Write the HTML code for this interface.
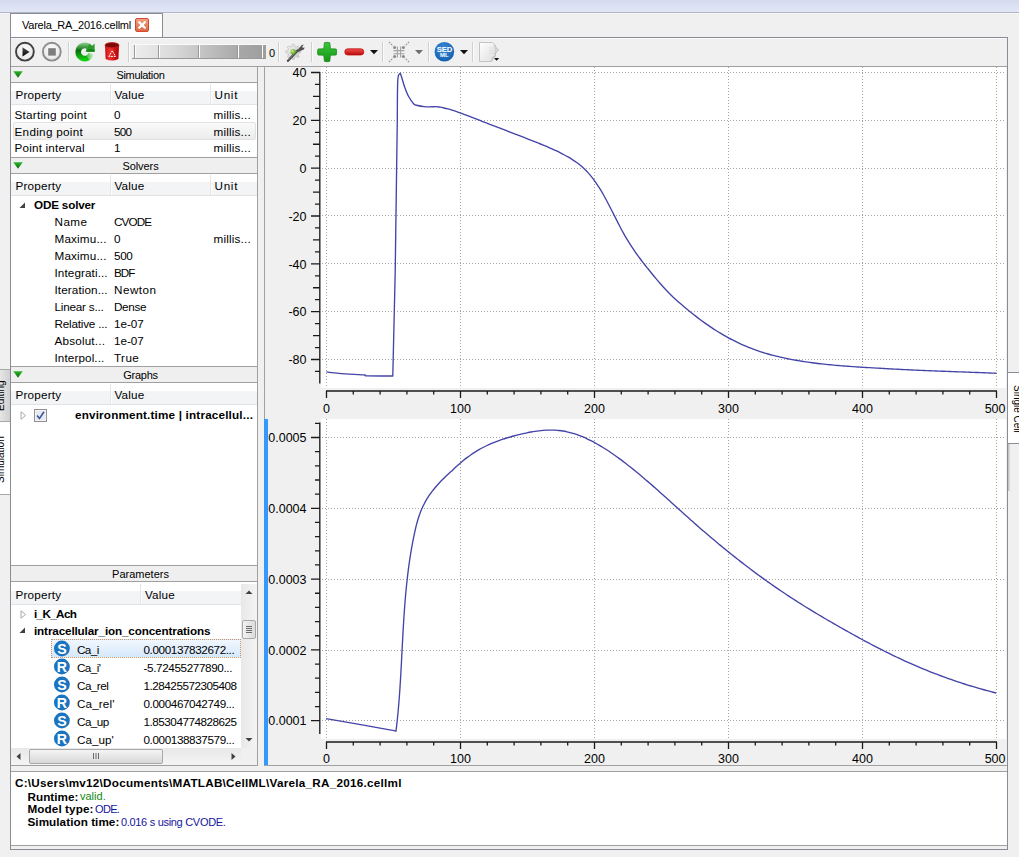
<!DOCTYPE html><html><head><meta charset="utf-8"><style>
html,body{margin:0;padding:0;}
body{width:1019px;height:857px;overflow:hidden;position:relative;background:#f0f0f0;font-family:"Liberation Sans", sans-serif;}
body div{position:absolute;}
svg{position:absolute;overflow:visible;}
</style></head><body>
<div style="left:0px;top:0px;width:1019px;height:12px;background:linear-gradient(#d5dbee,#e1e7f6)"></div>
<div style="left:0px;top:12px;width:1019px;height:1px;background:#b0b6c6"></div>
<div style="left:0px;top:13px;width:1019px;height:1px;background:#f6f6f6"></div>
<div style="left:10px;top:13px;width:153px;height:25px;background:#fff"></div>
<div style="left:10px;top:13px;width:1px;height:24px;background:#898c95"></div>
<div style="left:10px;top:13px;width:153px;height:1px;background:#898c95"></div>
<div style="left:162px;top:13px;width:1px;height:24px;background:#898c95"></div>
<div style="left:22px;top:20.19px;font-size:11px;line-height:11px;font-weight:400;color:#000;letter-spacing:-0.247px;white-space:pre;">Varela_RA_2016.cellml</div>
<div style="left:135px;top:18px;width:14px;height:14px;background:linear-gradient(#efa080,#dc6a45);border:1px solid #d44a30;border-radius:2px;box-sizing:border-box"></div>
<svg style="left:135px;top:18px" width="14" height="14" viewBox="0 0 14 14"><path d="M4.2 4.2L9.8 9.8M9.8 4.2L4.2 9.8" stroke="#fff" stroke-width="2.3" stroke-linecap="round"/></svg>
<div style="left:10px;top:37px;width:998px;height:1px;background:#898c95"></div>
<div style="left:10px;top:37px;width:1px;height:813px;background:#898c95"></div>
<div style="left:1007px;top:37px;width:1px;height:813px;background:#898c95"></div>
<div style="left:10px;top:849px;width:998px;height:1px;background:#898c95"></div>
<div style="left:11px;top:38px;width:996px;height:1px;background:#fafafa"></div>
<div style="left:11px;top:66px;width:996px;height:1px;background:#a0a0a0"></div>
<svg style="left:13px;top:40px" width="24" height="24" viewBox="0 0 24 24"><defs><radialGradient id="gw" cx="50%" cy="40%" r="60%"><stop offset="0" stop-color="#fff"/><stop offset="1" stop-color="#e4e4e4"/></radialGradient>
<linearGradient id="gk" x1="0" y1="0" x2="0" y2="1"><stop offset="0" stop-color="#555"/><stop offset="1" stop-color="#000"/></linearGradient></defs>
<circle cx="11.9" cy="11.7" r="8.9" fill="url(#gw)" stroke="#3f3f3f" stroke-width="1.9"/>
<path d="M9.5 7.2L16.6 11.9L9.5 16.6Z" fill="url(#gk)"/></svg>
<svg style="left:40px;top:40px" width="24" height="24" viewBox="0 0 24 24"><circle cx="11.8" cy="11.7" r="8.9" fill="url(#gw)" stroke="#8d8d8d" stroke-width="1.9"/>
<rect x="8.2" y="8.2" width="7.6" height="7.4" fill="#7d7d7d"/></svg>
<div style="left:68px;top:42px;width:1px;height:20px;background:#cfcfcf"></div>
<div style="left:69px;top:42px;width:1px;height:20px;background:#fbfbfb"></div>
<svg style="left:72px;top:41px" width="24" height="22" viewBox="0 0 24 22"><defs><linearGradient id="gg" x1="0" y1="1.5" x2="0" y2="20.5" gradientUnits="userSpaceOnUse"><stop offset="0" stop-color="#90d490"/><stop offset="0.42" stop-color="#0b6e0b"/><stop offset="1" stop-color="#12e012"/></linearGradient>
<linearGradient id="gt2" x1="14" y1="0" x2="22" y2="0" gradientUnits="userSpaceOnUse"><stop offset="0" stop-color="#1cc01c"/><stop offset="1" stop-color="#1cc01c" stop-opacity="0"/></linearGradient></defs>
<path d="M16.10 16.72A6.6 6.6 0 1 1 16.10 5.28" fill="none" stroke="url(#gg)" stroke-width="5.6"/>
<path d="M19.18 12.71A6.6 6.6 0 0 1 16.10 16.72" fill="none" stroke="url(#gt2)" stroke-width="5.6"/>
<path d="M14.6 7.6L17.4 2.6L20.2 4.8L22.6 2.6L22.6 10.8L13.6 10.8Z" fill="#2a9a2a"/>
<path d="M14.6 10.8L22.6 10.8L22.6 8.5Q18 7.5 15.4 9Z" fill="#128a12"/></svg>
<svg style="left:104px;top:42px" width="16" height="20" viewBox="0 0 16 20"><defs><linearGradient id="gr" x1="0" y1="0" x2="1" y2="0"><stop offset="0" stop-color="#c80e0e"/><stop offset="0.35" stop-color="#f03030"/><stop offset="1" stop-color="#b00000"/></linearGradient></defs>
<path d="M1 3L1.6 17Q8 20 14.4 17L15 3Z" fill="url(#gr)"/>
<ellipse cx="8" cy="3.2" rx="7" ry="2.6" fill="#7a0a0a" stroke="#d02020" stroke-width="0.8"/>
<path d="M8.2 8.8L11.6 14.4H4.8Z" fill="none" stroke="#fff" stroke-width="1" stroke-dasharray="2.2 0.9" stroke-linejoin="round"/></svg>
<div style="left:128px;top:42px;width:1px;height:20px;background:#cfcfcf"></div>
<div style="left:129px;top:42px;width:1px;height:20px;background:#fbfbfb"></div>
<div style="left:132px;top:44px;width:134px;height:1px;background:#fafafa"></div>
<div style="left:132px;top:45px;width:134px;height:13px;background:linear-gradient(90deg,#eeeeee,#dadada 30%,#a8a8a8 80%,#9d9d9d)"></div>
<div style="left:132px;top:58px;width:134px;height:1px;background:#9a9a9a"></div>
<div style="left:134px;top:45px;width:1px;height:13px;background:#9a9a9a"></div>
<div style="left:135px;top:45px;width:1px;height:13px;background:#fdfdfd"></div>
<div style="left:158px;top:45px;width:1px;height:13px;background:#9a9a9a"></div>
<div style="left:159px;top:45px;width:1px;height:13px;background:#fdfdfd"></div>
<div style="left:198px;top:45px;width:1px;height:13px;background:#9a9a9a"></div>
<div style="left:199px;top:45px;width:1px;height:13px;background:#fdfdfd"></div>
<div style="left:237px;top:45px;width:1px;height:13px;background:#9a9a9a"></div>
<div style="left:238px;top:45px;width:1px;height:13px;background:#fdfdfd"></div>
<div style="left:261px;top:45px;width:1px;height:13px;background:#9a9a9a"></div>
<div style="left:262px;top:45px;width:1px;height:13px;background:#fdfdfd"></div>
<div style="left:269px;top:47.69px;font-size:11px;line-height:11px;font-weight:400;color:#000;white-space:pre;">0</div>
<div style="left:278px;top:42px;width:1px;height:20px;background:#cfcfcf"></div>
<div style="left:279px;top:42px;width:1px;height:20px;background:#fbfbfb"></div>
<svg style="left:283px;top:42px" width="22" height="20" viewBox="0 0 22 20"><defs><radialGradient id="gb" cx="35%" cy="35%" r="70%"><stop offset="0" stop-color="#c8f080"/><stop offset="1" stop-color="#4a9a10"/></radialGradient>
<linearGradient id="gy" x1="0" y1="0" x2="1" y2="1"><stop offset="0" stop-color="#f4f4f4"/><stop offset="1" stop-color="#c8c8c8"/></linearGradient></defs>
<path d="M15.77 8.58L17.84 8.81L17.84 10.79L15.77 11.02L15.03 12.80L16.33 14.43L14.93 15.83L13.30 14.53L11.52 15.27L11.29 17.34L9.31 17.34L9.08 15.27L7.30 14.53L5.67 15.83L4.27 14.43L5.57 12.80L4.83 11.02L2.76 10.79L2.76 8.81L4.83 8.58L5.57 6.80L4.27 5.17L5.67 3.77L7.30 5.07L9.08 4.33L9.31 2.26L11.29 2.26L11.52 4.33L13.30 5.07L14.93 3.77L16.33 5.17L15.03 6.80Z" fill="url(#gy)" stroke="#bdbdbd" stroke-width="0.7"/>
<circle cx="10.3" cy="9.8" r="2.2" fill="#f0f0f0"/>
<path d="M5 18.8L14.5 8.6" stroke="#454545" stroke-width="2.3" stroke-linecap="round"/>
<path d="M5.4 18L14 8.8" stroke="#9a9a9a" stroke-width="0.7"/>
<path d="M14.2 8.2L17.6 4.6A2.6 2.6 0 0 1 20.8 2.8L19.2 4.6L20 6L21.4 5.2A2.6 2.6 0 0 1 18.6 8.2L15.4 10Z" fill="#505050"/>
<circle cx="10.2" cy="9.8" r="2.7" fill="url(#gb)"/></svg>
<div style="left:311px;top:42px;width:1px;height:20px;background:#cfcfcf"></div>
<div style="left:312px;top:42px;width:1px;height:20px;background:#fbfbfb"></div>
<svg style="left:317px;top:42px" width="21" height="20" viewBox="0 0 21 20"><defs><linearGradient id="gp" x1="0" y1="0" x2="0" y2="1"><stop offset="0" stop-color="#3cc83c"/><stop offset="1" stop-color="#149414"/></linearGradient></defs>
<path d="M7.4 0.8Q10 -0.2 12.8 0.8L13.4 6.8L19.2 7Q20.2 10 19.2 13L13.4 13.2L12.8 19.2Q10 20.2 7.4 19.2L6.8 13.2L1 13Q0 10 1 7L6.8 6.8Z" fill="url(#gp)" stroke="#1a8a1a" stroke-width="0.8"/></svg>
<svg style="left:344px;top:48px" width="21" height="8" viewBox="0 0 21 8"><defs><linearGradient id="gm" x1="0" y1="0" x2="0" y2="1"><stop offset="0" stop-color="#f05050"/><stop offset="1" stop-color="#b80808"/></linearGradient></defs>
<rect x="0.8" y="0.8" width="19" height="6.2" rx="3" fill="url(#gm)" stroke="#c41010" stroke-width="0.8"/></svg>
<svg style="left:369.5px;top:50px" width="9" height="5" viewBox="0 0 9 5"><path d="M0 0H8L4 4.2Z" fill="#111"/></svg>
<div style="left:382px;top:42px;width:1px;height:20px;background:#cfcfcf"></div>
<div style="left:383px;top:42px;width:1px;height:20px;background:#fbfbfb"></div>
<svg style="left:388px;top:41px" width="22" height="22" viewBox="0 0 22 22"><g stroke="#a4a4a4" stroke-width="1.1" fill="none">
<path d="M5.5 9.6H16.5M5.5 12.7H16.5M9.4 5.5V16.5M12.6 5.5V16.5"/></g>
<g stroke="#9a9a9a" stroke-width="1.3" fill="none"><path d="M1 1L5 5M21 1L17 5M1 21L5 17M21 21L17 17" stroke-dasharray="1.6 1.1"/></g>
<g fill="#8a8a8a"><circle cx="6.6" cy="6.4" r="1.5"/><circle cx="15.4" cy="6.4" r="1.5"/><circle cx="6.6" cy="15.6" r="1.5"/><circle cx="15.4" cy="15.6" r="1.5"/></g></svg>
<svg style="left:414.5px;top:50px" width="9" height="5" viewBox="0 0 9 5"><path d="M0 0H8L4 4.2Z" fill="#6e6e6e"/></svg>
<div style="left:428px;top:42px;width:1px;height:20px;background:#cfcfcf"></div>
<div style="left:429px;top:42px;width:1px;height:20px;background:#fbfbfb"></div>
<svg style="left:434px;top:41px" width="21" height="21" viewBox="0 0 21 21"><defs><radialGradient id="gs" cx="45%" cy="35%" r="65%"><stop offset="0" stop-color="#3a8ad8"/><stop offset="1" stop-color="#1560b0"/></radialGradient></defs>
<circle cx="10.4" cy="10.8" r="9.8" fill="url(#gs)"/>
<text x="10.4" y="11" text-anchor="middle" font-family="Liberation Sans" font-weight="700" font-size="7.8" fill="#fff" letter-spacing="-0.2">SED</text>
<text x="10.4" y="16.4" text-anchor="middle" font-family="Liberation Sans" font-weight="700" font-size="6" fill="#fff">ML</text></svg>
<svg style="left:459.5px;top:50px" width="9" height="5" viewBox="0 0 9 5"><path d="M0 0H8L4 4.2Z" fill="#111"/></svg>
<div style="left:472px;top:42px;width:1px;height:20px;background:#cfcfcf"></div>
<div style="left:473px;top:42px;width:1px;height:20px;background:#fbfbfb"></div>
<svg style="left:479px;top:42px" width="22" height="20" viewBox="0 0 22 20"><defs><linearGradient id="gd" x1="0" y1="0" x2="1" y2="1"><stop offset="0" stop-color="#ffffff"/><stop offset="1" stop-color="#dedede"/></linearGradient></defs>
<path d="M0.5 0.5H13.5L16.5 3.5V14L12.5 19.5H0.5Z" fill="url(#gd)" stroke="#c4c4c4" stroke-width="1"/>
<path d="M12.5 19.5L13.5 15L16.5 14" fill="#d8d8d8" stroke="#bdbdbd" stroke-width="0.8"/>
<path d="M15 3.5L19 8L15 12.5" fill="none" stroke="#c8c8c8" stroke-width="1.6"/>
<path d="M10 6H17M10 8.5H17M10 11H16" stroke="#dadada" stroke-width="0.8"/>
<path d="M15 16H20.2L17.6 18.8Z" fill="#111"/></svg>
<div style="left:11px;top:67px;width:246px;height:698px;background:#fff"></div>
<div style="left:257px;top:67px;width:1px;height:699px;background:#a0a0a0"></div>
<div style="left:11px;top:765px;width:247px;height:1px;background:#a0a0a0"></div>
<div style="left:11px;top:67px;width:246px;height:15px;background:#efefef"></div>
<div style="left:11px;top:66px;width:246px;height:1px;background:#a0a0a0"></div>
<div style="left:11px;top:82px;width:246px;height:1px;background:#a0a0a0"></div>
<svg style="left:13px;top:71px" width="11" height="8" viewBox="0 0 11 8"><defs><linearGradient id="gt" x1="0" y1="0" x2="0" y2="1"><stop offset="0" stop-color="#2cb52c"/><stop offset="1" stop-color="#0a6a0a"/></linearGradient></defs><path d="M0.3 0.3H9.7L5 6.7Z" fill="url(#gt)"/></svg>
<div style="left:-59.5px;width:400px;text-align:center;top:69.99px;font-size:11px;line-height:11px;font-weight:400;color:#000;letter-spacing:-0.329px;white-space:pre;">Simulation</div>
<div style="left:11px;top:83px;width:246px;height:8px;background:#fff"></div>
<div style="left:11px;top:91px;width:246px;height:13px;background:#f3f4f6"></div>
<div style="left:11px;top:104px;width:246px;height:1px;background:#e3e3e3"></div>
<div style="left:110px;top:84px;width:1px;height:20px;background:#e6e6e6"></div>
<div style="left:111px;top:84px;width:1px;height:20px;background:#fdfdfd"></div>
<div style="left:210px;top:84px;width:1px;height:20px;background:#e6e6e6"></div>
<div style="left:211px;top:84px;width:1px;height:20px;background:#fdfdfd"></div>
<div style="left:15.5px;top:88.60px;font-size:11.7px;line-height:11.7px;font-weight:400;color:#000;letter-spacing:0.190px;white-space:pre;">Property</div>
<div style="left:114.5px;top:88.60px;font-size:11.7px;line-height:11.7px;font-weight:400;color:#000;letter-spacing:0.192px;white-space:pre;">Value</div>
<div style="left:214.5px;top:88.60px;font-size:11.7px;line-height:11.7px;font-weight:400;color:#000;letter-spacing:0.701px;white-space:pre;">Unit</div>
<div style="left:13px;top:122px;width:243px;height:18px;background:linear-gradient(#fafafa,#ececec);border:1px solid #e2e2e2;border-radius:2px;box-sizing:border-box"></div>
<div style="left:14.5px;top:108.80px;font-size:11.7px;line-height:11.7px;font-weight:400;color:#000;letter-spacing:0.263px;white-space:pre;">Starting point</div>
<div style="left:114px;top:108.80px;font-size:11.7px;line-height:11.7px;font-weight:400;color:#000;white-space:pre;">0</div>
<div style="left:213.5px;top:108.80px;font-size:11.7px;line-height:11.7px;font-weight:400;color:#000;letter-spacing:0.185px;white-space:pre;">millis...</div>
<div style="left:14.5px;top:125.60px;font-size:11.7px;line-height:11.7px;font-weight:400;color:#000;letter-spacing:0.301px;white-space:pre;">Ending point</div>
<div style="left:114px;top:125.60px;font-size:11.7px;line-height:11.7px;font-weight:400;color:#000;letter-spacing:-0.708px;white-space:pre;">500</div>
<div style="left:213.5px;top:125.60px;font-size:11.7px;line-height:11.7px;font-weight:400;color:#000;letter-spacing:0.185px;white-space:pre;">millis...</div>
<div style="left:14.5px;top:142.40px;font-size:11.7px;line-height:11.7px;font-weight:400;color:#000;letter-spacing:0.194px;white-space:pre;">Point interval</div>
<div style="left:114px;top:142.40px;font-size:11.7px;line-height:11.7px;font-weight:400;color:#000;white-space:pre;">1</div>
<div style="left:213.5px;top:142.40px;font-size:11.7px;line-height:11.7px;font-weight:400;color:#000;letter-spacing:0.185px;white-space:pre;">millis...</div>
<div style="left:11px;top:158px;width:246px;height:15px;background:#efefef"></div>
<div style="left:11px;top:157px;width:246px;height:1px;background:#a0a0a0"></div>
<div style="left:11px;top:173px;width:246px;height:1px;background:#a0a0a0"></div>
<svg style="left:13px;top:162px" width="11" height="8" viewBox="0 0 11 8"><defs><linearGradient id="gt" x1="0" y1="0" x2="0" y2="1"><stop offset="0" stop-color="#2cb52c"/><stop offset="1" stop-color="#0a6a0a"/></linearGradient></defs><path d="M0.3 0.3H9.7L5 6.7Z" fill="url(#gt)"/></svg>
<div style="left:-59.5px;width:400px;text-align:center;top:160.99px;font-size:11px;line-height:11px;font-weight:400;color:#000;letter-spacing:-0.081px;white-space:pre;">Solvers</div>
<div style="left:11px;top:174px;width:246px;height:8px;background:#fff"></div>
<div style="left:11px;top:182px;width:246px;height:13px;background:#f3f4f6"></div>
<div style="left:11px;top:195px;width:246px;height:1px;background:#e3e3e3"></div>
<div style="left:110px;top:175px;width:1px;height:20px;background:#e6e6e6"></div>
<div style="left:111px;top:175px;width:1px;height:20px;background:#fdfdfd"></div>
<div style="left:210px;top:175px;width:1px;height:20px;background:#e6e6e6"></div>
<div style="left:211px;top:175px;width:1px;height:20px;background:#fdfdfd"></div>
<div style="left:15.5px;top:179.60px;font-size:11.7px;line-height:11.7px;font-weight:400;color:#000;letter-spacing:0.190px;white-space:pre;">Property</div>
<div style="left:114.5px;top:179.60px;font-size:11.7px;line-height:11.7px;font-weight:400;color:#000;letter-spacing:0.192px;white-space:pre;">Value</div>
<div style="left:214.5px;top:179.60px;font-size:11.7px;line-height:11.7px;font-weight:400;color:#000;letter-spacing:0.701px;white-space:pre;">Unit</div>
<svg style="left:18.5px;top:201.5px" width="7" height="7" viewBox="0 0 7 7"><path d="M6 0.5V6H0.5Z" fill="#404040"/></svg>
<div style="left:34px;top:199.40px;font-size:11.7px;line-height:11.7px;font-weight:700;color:#000;letter-spacing:-0.180px;white-space:pre;">ODE solver</div>
<div style="left:54.5px;top:216.40px;font-size:11.7px;line-height:11.7px;font-weight:400;color:#000;letter-spacing:0.438px;white-space:pre;">Name</div>
<div style="left:114px;top:216.40px;font-size:11.7px;line-height:11.7px;font-weight:400;color:#000;letter-spacing:-0.895px;white-space:pre;">CVODE</div>
<div style="left:54.5px;top:233.32px;font-size:11.7px;line-height:11.7px;font-weight:400;color:#000;letter-spacing:0.168px;white-space:pre;">Maximu...</div>
<div style="left:114px;top:233.32px;font-size:11.7px;line-height:11.7px;font-weight:400;color:#000;white-space:pre;">0</div>
<div style="left:213.5px;top:233.32px;font-size:11.7px;line-height:11.7px;font-weight:400;color:#000;letter-spacing:0.185px;white-space:pre;">millis...</div>
<div style="left:54.5px;top:250.24px;font-size:11.7px;line-height:11.7px;font-weight:400;color:#000;letter-spacing:0.168px;white-space:pre;">Maximu...</div>
<div style="left:114px;top:250.24px;font-size:11.7px;line-height:11.7px;font-weight:400;color:#000;letter-spacing:-0.358px;white-space:pre;">500</div>
<div style="left:54.5px;top:267.16px;font-size:11.7px;line-height:11.7px;font-weight:400;color:#000;letter-spacing:0.101px;white-space:pre;">Integrati...</div>
<div style="left:114px;top:267.16px;font-size:11.7px;line-height:11.7px;font-weight:400;color:#000;letter-spacing:-0.938px;white-space:pre;">BDF</div>
<div style="left:54.5px;top:284.08px;font-size:11.7px;line-height:11.7px;font-weight:400;color:#000;letter-spacing:0.101px;white-space:pre;">Iteration...</div>
<div style="left:114px;top:284.08px;font-size:11.7px;line-height:11.7px;font-weight:400;color:#000;letter-spacing:0.492px;white-space:pre;">Newton</div>
<div style="left:54.5px;top:301.00px;font-size:11.7px;line-height:11.7px;font-weight:400;color:#000;letter-spacing:-0.203px;white-space:pre;">Linear s...</div>
<div style="left:114px;top:301.00px;font-size:11.7px;line-height:11.7px;font-weight:400;color:#000;letter-spacing:-0.324px;white-space:pre;">Dense</div>
<div style="left:54.5px;top:317.92px;font-size:11.7px;line-height:11.7px;font-weight:400;color:#000;letter-spacing:-0.193px;white-space:pre;">Relative ...</div>
<div style="left:114px;top:317.92px;font-size:11.7px;line-height:11.7px;font-weight:400;color:#000;letter-spacing:-0.027px;white-space:pre;">1e-07</div>
<div style="left:54.5px;top:334.84px;font-size:11.7px;line-height:11.7px;font-weight:400;color:#000;letter-spacing:0.185px;white-space:pre;">Absolut...</div>
<div style="left:114px;top:334.84px;font-size:11.7px;line-height:11.7px;font-weight:400;color:#000;letter-spacing:-0.027px;white-space:pre;">1e-07</div>
<div style="left:54.5px;top:351.76px;font-size:11.7px;line-height:11.7px;font-weight:400;color:#000;letter-spacing:0.107px;white-space:pre;">Interpol...</div>
<div style="left:114px;top:351.76px;font-size:11.7px;line-height:11.7px;font-weight:400;color:#000;letter-spacing:0.397px;white-space:pre;">True</div>
<div style="left:11px;top:367px;width:246px;height:15px;background:#efefef"></div>
<div style="left:11px;top:366px;width:246px;height:1px;background:#a0a0a0"></div>
<div style="left:11px;top:382px;width:246px;height:1px;background:#a0a0a0"></div>
<svg style="left:13px;top:371px" width="11" height="8" viewBox="0 0 11 8"><defs><linearGradient id="gt" x1="0" y1="0" x2="0" y2="1"><stop offset="0" stop-color="#2cb52c"/><stop offset="1" stop-color="#0a6a0a"/></linearGradient></defs><path d="M0.3 0.3H9.7L5 6.7Z" fill="url(#gt)"/></svg>
<div style="left:-59.5px;width:400px;text-align:center;top:369.99px;font-size:11px;line-height:11px;font-weight:400;color:#000;letter-spacing:-0.236px;white-space:pre;">Graphs</div>
<div style="left:11px;top:383px;width:246px;height:8px;background:#fff"></div>
<div style="left:11px;top:391px;width:246px;height:13px;background:#f3f4f6"></div>
<div style="left:11px;top:404px;width:246px;height:1px;background:#e3e3e3"></div>
<div style="left:110px;top:384px;width:1px;height:20px;background:#e6e6e6"></div>
<div style="left:111px;top:384px;width:1px;height:20px;background:#fdfdfd"></div>
<div style="left:15.5px;top:388.60px;font-size:11.7px;line-height:11.7px;font-weight:400;color:#000;letter-spacing:0.190px;white-space:pre;">Property</div>
<div style="left:114.5px;top:388.60px;font-size:11.7px;line-height:11.7px;font-weight:400;color:#000;letter-spacing:0.192px;white-space:pre;">Value</div>
<svg style="left:19.5px;top:410.5px" width="7" height="9" viewBox="0 0 7 9"><path d="M1 0.8L5.6 4.5L1 8.2Z" fill="#fff" stroke="#a8a8a8" stroke-width="1"/></svg>
<svg style="left:34px;top:409px" width="13" height="13" viewBox="0 0 13 13"><rect x="0.5" y="0.5" width="12" height="12" fill="#f4f4f4" stroke="#8f8f8f"/><rect x="2" y="2" width="9" height="9" fill="#e6eaf0"/><path d="M3 6.5L5.5 9.5L10 2.8" fill="none" stroke="#3b55a0" stroke-width="1.6"/></svg>
<div style="left:75px;top:409.40px;font-size:11.7px;line-height:11.7px;font-weight:700;color:#000;letter-spacing:0.180px;white-space:pre;">environment.time | intracellul...</div>
<div style="left:11px;top:566px;width:246px;height:15px;background:#efefef"></div>
<div style="left:11px;top:565px;width:246px;height:1px;background:#a0a0a0"></div>
<div style="left:11px;top:581px;width:246px;height:1px;background:#a0a0a0"></div>
<div style="left:-59.5px;width:400px;text-align:center;top:568.99px;font-size:11px;line-height:11px;font-weight:400;color:#000;letter-spacing:0.005px;white-space:pre;">Parameters</div>
<div style="left:11px;top:583px;width:246px;height:8px;background:#fff"></div>
<div style="left:11px;top:591px;width:246px;height:13px;background:#f3f4f6"></div>
<div style="left:11px;top:604px;width:246px;height:1px;background:#e3e3e3"></div>
<div style="left:140px;top:584px;width:1px;height:20px;background:#e6e6e6"></div>
<div style="left:141px;top:584px;width:1px;height:20px;background:#fdfdfd"></div>
<div style="left:15.5px;top:588.60px;font-size:11.7px;line-height:11.7px;font-weight:400;color:#000;letter-spacing:0.190px;white-space:pre;">Property</div>
<div style="left:145px;top:588.60px;font-size:11.7px;line-height:11.7px;font-weight:400;color:#000;letter-spacing:0.192px;white-space:pre;">Value</div>
<svg style="left:19.5px;top:609.5px" width="7" height="9" viewBox="0 0 7 9"><path d="M1 0.8L5.6 4.5L1 8.2Z" fill="#fff" stroke="#a8a8a8" stroke-width="1"/></svg>
<div style="left:34px;top:608.40px;font-size:11.7px;line-height:11.7px;font-weight:700;color:#000;letter-spacing:-0.647px;white-space:pre;">i_K_Ach</div>
<svg style="left:18.5px;top:627px" width="7" height="7" viewBox="0 0 7 7"><path d="M6 0.5V6H0.5Z" fill="#404040"/></svg>
<div style="left:34px;top:625.20px;font-size:11.7px;line-height:11.7px;font-weight:700;color:#000;letter-spacing:-0.134px;white-space:pre;">intracellular_ion_concentrations</div>
<div style="left:51px;top:639px;width:190px;height:19px;background:linear-gradient(#f1f7fe,#d6e8fb);border:1px dotted #c8946a;box-sizing:border-box"></div>
<svg style="left:53px;top:640px" width="18" height="17" viewBox="0 0 18 17"><circle cx="8.9" cy="8.50" r="7.9" fill="#1a74c0"/><text x="8.9" y="13.70" text-anchor="middle" font-family="Liberation Sans" font-weight="700" font-size="14.2" fill="#fff">S</text></svg>
<div style="left:77px;top:643.50px;font-size:11.7px;line-height:11.7px;font-weight:400;color:#000;letter-spacing:-0.582px;white-space:pre;">Ca_i</div>
<div style="left:143.5px;top:643.50px;font-size:11.7px;line-height:11.7px;font-weight:400;color:#000;letter-spacing:-0.394px;white-space:pre;">0.000137832672...</div>
<svg style="left:53px;top:658px" width="18" height="17" viewBox="0 0 18 17"><circle cx="8.9" cy="8.50" r="7.9" fill="#1a74c0"/><text x="8.9" y="13.70" text-anchor="middle" font-family="Liberation Sans" font-weight="700" font-size="14.2" fill="#fff">R</text></svg>
<div style="left:77px;top:661.50px;font-size:11.7px;line-height:11.7px;font-weight:400;color:#000;letter-spacing:-0.570px;white-space:pre;">Ca_i'</div>
<div style="left:143.5px;top:661.50px;font-size:11.7px;line-height:11.7px;font-weight:400;color:#000;letter-spacing:-0.374px;white-space:pre;">-5.72455277890...</div>
<svg style="left:53px;top:676px" width="18" height="17" viewBox="0 0 18 17"><circle cx="8.9" cy="8.50" r="7.9" fill="#1a74c0"/><text x="8.9" y="13.70" text-anchor="middle" font-family="Liberation Sans" font-weight="700" font-size="14.2" fill="#fff">S</text></svg>
<div style="left:77px;top:679.50px;font-size:11.7px;line-height:11.7px;font-weight:400;color:#000;letter-spacing:-0.528px;white-space:pre;">Ca_rel</div>
<div style="left:143.5px;top:679.50px;font-size:11.7px;line-height:11.7px;font-weight:400;color:#000;letter-spacing:-0.477px;white-space:pre;">1.28425572305408</div>
<svg style="left:53px;top:694px" width="18" height="17" viewBox="0 0 18 17"><circle cx="8.9" cy="8.50" r="7.9" fill="#1a74c0"/><text x="8.9" y="13.70" text-anchor="middle" font-family="Liberation Sans" font-weight="700" font-size="14.2" fill="#fff">R</text></svg>
<div style="left:77px;top:697.50px;font-size:11.7px;line-height:11.7px;font-weight:400;color:#000;letter-spacing:0.121px;white-space:pre;">Ca_rel'</div>
<div style="left:143.5px;top:697.50px;font-size:11.7px;line-height:11.7px;font-weight:400;color:#000;letter-spacing:-0.394px;white-space:pre;">0.000467042749...</div>
<svg style="left:53px;top:712px" width="18" height="17" viewBox="0 0 18 17"><circle cx="8.9" cy="8.50" r="7.9" fill="#1a74c0"/><text x="8.9" y="13.70" text-anchor="middle" font-family="Liberation Sans" font-weight="700" font-size="14.2" fill="#fff">S</text></svg>
<div style="left:77px;top:715.50px;font-size:11.7px;line-height:11.7px;font-weight:400;color:#000;letter-spacing:-0.563px;white-space:pre;">Ca_up</div>
<div style="left:143.5px;top:715.50px;font-size:11.7px;line-height:11.7px;font-weight:400;color:#000;letter-spacing:-0.477px;white-space:pre;">1.85304774828625</div>
<svg style="left:53px;top:730px" width="18" height="17" viewBox="0 0 18 17"><circle cx="8.9" cy="8.50" r="7.9" fill="#1a74c0"/><text x="8.9" y="13.70" text-anchor="middle" font-family="Liberation Sans" font-weight="700" font-size="14.2" fill="#fff">R</text></svg>
<div style="left:77px;top:733.50px;font-size:11.7px;line-height:11.7px;font-weight:400;color:#000;letter-spacing:0.026px;white-space:pre;">Ca_up'</div>
<div style="left:143.5px;top:733.50px;font-size:11.7px;line-height:11.7px;font-weight:400;color:#000;letter-spacing:-0.394px;white-space:pre;">0.000138837579...</div>
<div style="left:241px;top:584px;width:16px;height:164px;background:linear-gradient(90deg,#e8e8e8,#f4f4f4)"></div>
<svg style="left:241px;top:588px" width="16" height="8" viewBox="0 0 16 8"><path d="M4.5 6H11.5L8 2.5Z" fill="#404040"/></svg>
<svg style="left:241px;top:736px" width="16" height="8" viewBox="0 0 16 8"><path d="M4.5 2H11.5L8 5.5Z" fill="#404040"/></svg>
<div style="left:242px;top:620px;width:14px;height:19px;background:linear-gradient(90deg,#f2f2f2,#dcdcdc);border:1px solid #a8a8a8;border-radius:2px;box-sizing:border-box"></div>
<svg style="left:242px;top:620px" width="14" height="19" viewBox="0 0 14 19"><path d="M4 6.5H10M4 8.5H10M4 10.5H10M4 12.5H10" stroke="#6a6a6a" stroke-width="1"/></svg>
<div style="left:11px;top:748px;width:230px;height:17px;background:linear-gradient(#e8e8e8,#f4f4f4)"></div>
<div style="left:241px;top:748px;width:16px;height:17px;background:#f0f0f0"></div>
<svg style="left:11px;top:748px" width="16" height="17" viewBox="0 0 16 17"><path d="M9.5 5V12L5.5 8.5Z" fill="#404040"/></svg>
<svg style="left:225px;top:748px" width="16" height="17" viewBox="0 0 16 17"><path d="M6.5 5V12L10.5 8.5Z" fill="#404040"/></svg>
<div style="left:29px;top:749px;width:134px;height:15px;background:linear-gradient(#f4f4f4,#d8d8d8);border:1px solid #a8a8a8;border-radius:2px;box-sizing:border-box"></div>
<svg style="left:29px;top:749px" width="134" height="15" viewBox="0 0 134 15"><path d="M64.5 4V10M67 4V10M69.5 4V10" stroke="#6a6a6a" stroke-width="1"/></svg>
<div style="left:258px;top:67px;width:6px;height:699px;background:#f0f0f0"></div>
<div style="left:264px;top:67px;width:743px;height:699px;background:#f0f0f0"></div>
<div style="left:264px;top:67px;width:1px;height:352px;background:#a0a0a0"></div>
<div style="left:264px;top:419px;width:4px;height:347px;background:#3399ff"></div>
<div style="left:264px;top:765px;width:743px;height:1px;background:#a0a0a0"></div>
<div style="left:321px;top:67px;width:685px;height:321px;background:#fff"></div>
<div style="left:321px;top:419px;width:685px;height:320px;background:#fff"></div>
<svg style="left:0px;top:0px" width="1019" height="857" viewBox="0 0 1019 857"><path d="M322 72.5H1006 M322 120.5H1006 M322 168.5H1006 M322 215.5H1006 M322 263.5H1006 M322 311.5H1006 M322 359.5H1006 M326.5 67V388 M460.5 67V388 M594.5 67V388 M728.5 67V388 M862.5 67V388 M996.5 67V388" stroke="#a4a4a4" stroke-width="1" stroke-dasharray="1 2" fill="none" shape-rendering="crispEdges"/><path d="M326.4 371.9C327.78 372.07 331.52 372.57 334.7 372.9C337.88 373.23 340.58 373.58 345.5 373.9C350.42 374.22 360.6 374.48 364.2 374.8C367.8 375.12 362.33 375.6 367.1 375.8C371.87 376 388.52 375.97 392.8 376C393.2 358.67 394.8 289.33 395.2 272C395.55 246.67 396.95 145.33 397.3 120C397.38 113.33 397.3 87.8 397.8 80C398.3 72.2 399.88 74.33 400.3 73.2C400.62 74.17 401.5 76.78 402.2 79C402.9 81.22 403.45 83.62 404.5 86.5C405.55 89.38 406.95 93.4 408.5 96.3C410.05 99.2 412.27 102.37 413.8 103.9C415.33 105.43 416 105.05 417.7 105.5C419.4 105.95 421.95 106.37 424 106.6C426.05 106.83 428 106.89 430 106.9C432 106.91 434.33 106.6 436 106.65C437.67 106.7 438.67 106.98 440 107.2C441.33 107.42 442.67 107.69 444 107.98C445.33 108.27 446.67 108.61 448 108.97C449.33 109.32 450.67 109.71 452 110.12C453.33 110.53 454.67 110.97 456 111.42C457.33 111.87 458.67 112.34 460 112.82C461.33 113.31 462.67 113.81 464 114.31C465.33 114.81 466.67 115.33 468 115.84C469.33 116.36 470.67 116.88 472 117.39C473.33 117.91 474.67 118.42 476 118.94C477.33 119.45 478.67 119.97 480 120.48C481.33 121 482.67 121.51 484 122.03C485.33 122.54 486.67 123.05 488 123.57C489.33 124.08 490.67 124.59 492 125.11C493.33 125.62 494.67 126.13 496 126.65C497.33 127.16 498.67 127.67 500 128.19C501.33 128.7 502.67 129.21 504 129.73C505.33 130.24 506.67 130.75 508 131.27C509.33 131.78 510.67 132.3 512 132.81C513.33 133.33 514.67 133.84 516 134.36C517.33 134.87 518.67 135.39 520 135.9C521.33 136.42 522.67 136.94 524 137.46C525.33 137.97 526.67 138.49 528 139.01C529.33 139.53 530.67 140.05 532 140.57C533.33 141.1 534.67 141.62 536 142.15C537.33 142.68 538.67 143.21 540 143.75C541.33 144.3 542.67 144.84 544 145.4C545.33 145.96 546.67 146.52 548 147.1C549.33 147.68 550.67 148.27 552 148.88C553.33 149.48 554.67 150.1 556 150.73C557.33 151.37 558.67 152.02 560 152.69C561.33 153.36 562.67 154.04 564 154.75C565.33 155.46 566.67 156.18 568 156.94C569.33 157.7 570.67 158.47 572 159.31C573.33 160.14 574.67 161 576 161.95C577.33 162.89 578.67 163.88 580 164.97C581.33 166.06 582.67 167.22 584 168.49C585.33 169.76 586.67 171.13 588 172.61C589.33 174.09 590.67 175.67 592 177.37C593.33 179.07 594.67 180.88 596 182.81C597.33 184.73 598.67 186.77 600 188.93C601.33 191.09 602.67 193.38 604 195.76C605.33 198.14 606.67 200.66 608 203.2C609.33 205.74 610.67 208.38 612 211C613.33 213.62 614.67 216.3 616 218.91C617.33 221.53 618.67 224.16 620 226.69C621.33 229.22 622.67 231.72 624 234.09C625.33 236.46 626.67 238.73 628 240.91C629.33 243.1 630.67 245.18 632 247.2C633.33 249.22 634.67 251.15 636 253.03C637.33 254.92 638.67 256.73 640 258.51C641.33 260.3 642.67 262.02 644 263.74C645.33 265.45 646.67 267.12 648 268.79C649.33 270.46 650.67 272.11 652 273.74C653.33 275.38 654.67 277 656 278.58C657.33 280.17 658.67 281.73 660 283.26C661.33 284.79 662.67 286.29 664 287.75C665.33 289.21 666.67 290.64 668 292.01C669.33 293.39 670.67 294.72 672 296.01C673.33 297.31 674.67 298.55 676 299.77C677.33 300.99 678.67 302.18 680 303.34C681.33 304.5 682.67 305.64 684 306.76C685.33 307.88 686.67 308.98 688 310.06C689.33 311.15 690.67 312.22 692 313.28C693.33 314.34 694.67 315.38 696 316.4C697.33 317.43 698.67 318.44 700 319.43C701.33 320.42 702.67 321.39 704 322.35C705.33 323.31 706.67 324.24 708 325.16C709.33 326.08 710.67 326.99 712 327.87C713.33 328.75 714.67 329.61 716 330.46C717.33 331.3 718.67 332.13 720 332.94C721.33 333.74 722.67 334.53 724 335.3C725.33 336.07 726.67 336.82 728 337.55C729.33 338.28 730.67 339 732 339.69C733.33 340.38 734.67 341.06 736 341.71C737.33 342.37 738.67 343.01 740 343.63C741.33 344.25 742.67 344.85 744 345.43C745.33 346.01 746.67 346.57 748 347.12C749.33 347.66 750.67 348.19 752 348.7C753.33 349.21 754.67 349.7 756 350.17C757.33 350.64 758.67 351.1 760 351.53C761.33 351.97 762.67 352.39 764 352.8C765.33 353.21 766.67 353.6 768 353.98C769.33 354.36 770.67 354.72 772 355.07C773.33 355.42 774.67 355.76 776 356.09C777.33 356.42 778.67 356.73 780 357.04C781.33 357.34 782.67 357.64 784 357.93C785.33 358.21 786.67 358.49 788 358.76C789.33 359.03 790.67 359.29 792 359.54C793.33 359.79 794.67 360.03 796 360.26C797.33 360.5 798.67 360.72 800 360.94C801.33 361.16 802.67 361.37 804 361.58C805.33 361.78 806.67 361.98 808 362.17C809.33 362.36 810.67 362.54 812 362.72C813.33 362.89 814.67 363.06 816 363.23C817.33 363.39 818.67 363.55 820 363.71C821.33 363.86 822.67 364.01 824 364.15C825.33 364.29 826.67 364.43 828 364.57C829.33 364.7 830.67 364.83 832 364.95C833.33 365.08 834.67 365.2 836 365.31C837.33 365.43 838.67 365.54 840 365.65C841.33 365.76 842.67 365.87 844 365.97C845.33 366.07 846.67 366.17 848 366.27C849.33 366.37 850.67 366.46 852 366.55C853.33 366.65 854.67 366.74 856 366.83C857.33 366.91 858.67 367 860 367.09C861.33 367.17 862.67 367.25 864 367.34C865.33 367.42 866.67 367.5 868 367.58C869.33 367.66 870.67 367.74 872 367.82C873.33 367.9 874.67 367.98 876 368.06C877.33 368.14 878.67 368.22 880 368.29C881.33 368.37 882.67 368.44 884 368.52C885.33 368.59 886.67 368.67 888 368.74C889.33 368.81 890.67 368.89 892 368.96C893.33 369.03 894.67 369.1 896 369.17C897.33 369.24 898.67 369.31 900 369.38C901.33 369.45 902.67 369.51 904 369.58C905.33 369.65 906.67 369.71 908 369.78C909.33 369.84 910.67 369.9 912 369.97C913.33 370.03 914.67 370.09 916 370.15C917.33 370.21 918.67 370.27 920 370.33C921.33 370.39 922.67 370.45 924 370.5C925.33 370.56 926.67 370.62 928 370.67C929.33 370.73 930.67 370.78 932 370.83C933.33 370.89 934.67 370.94 936 370.99C937.33 371.04 938.67 371.09 940 371.14C941.33 371.19 942.67 371.24 944 371.29C945.33 371.34 946.67 371.39 948 371.44C949.33 371.49 950.67 371.54 952 371.58C953.33 371.63 954.67 371.68 956 371.73C957.33 371.78 958.67 371.82 960 371.87C961.33 371.92 962.67 371.97 964 372.02C965.33 372.06 966.67 372.11 968 372.16C969.33 372.21 970.67 372.26 972 372.31C973.33 372.36 974.67 372.41 976 372.46C977.33 372.51 978.67 372.56 980 372.61C981.33 372.66 982.67 372.71 984 372.76C985.33 372.81 986.67 372.87 988 372.92C989.33 372.97 990.58 373.02 992 373.08C993.42 373.14 995.75 373.24 996.5 373.28" stroke="#4444a8" stroke-width="1.35" fill="none" stroke-linejoin="round"/><path d="M319.8 72V383.4 M311 72.5H320 M311 120.334H320 M311 168.168H320 M311 216.002H320 M311 263.836H320 M311 311.67H320 M311 359.504H320 M313 96.417H320 M313 144.251H320 M313 192.085H320 M313 239.919H320 M313 287.75300000000004H320 M313 335.587H320 M315 84.4585H320 M315 108.3755H320 M315 132.29250000000002H320 M315 156.2095H320 M315 180.12650000000002H320 M315 204.0435H320 M315 227.96050000000002H320 M315 251.8775H320 M315 275.7945H320 M315 299.7115H320 M315 323.62850000000003H320 M315 347.5455H320 M315 371.46250000000003H320 M326 391H997 M326.5 391V398 M353.3 391V394.5 M380.1 391V394.5 M406.9 391V394.5 M433.7 391V394.5 M460.5 391V398 M487.3 391V394.5 M514.1 391V394.5 M540.9 391V394.5 M567.7 391V394.5 M594.5 391V398 M621.3 391V394.5 M648.1 391V394.5 M674.9 391V394.5 M701.7 391V394.5 M728.5 391V398 M755.3 391V394.5 M782.1 391V394.5 M808.9 391V394.5 M835.7 391V394.5 M862.5 391V398 M889.3 391V394.5 M916.1 391V394.5 M942.9 391V394.5 M969.7 391V394.5 M996.5 391V398" stroke="#1a1a1a" stroke-width="1.3" fill="none"/></svg>
<div style="right:712.5px;top:67.22px;font-size:12.5px;line-height:12.5px;font-weight:400;color:#000;white-space:pre;">40</div>
<div style="right:712.5px;top:115.05px;font-size:12.5px;line-height:12.5px;font-weight:400;color:#000;white-space:pre;">20</div>
<div style="right:712.5px;top:162.89px;font-size:12.5px;line-height:12.5px;font-weight:400;color:#000;white-space:pre;">0</div>
<div style="right:712.5px;top:210.72px;font-size:12.5px;line-height:12.5px;font-weight:400;color:#000;white-space:pre;">-20</div>
<div style="right:712.5px;top:258.55px;font-size:12.5px;line-height:12.5px;font-weight:400;color:#000;white-space:pre;">-40</div>
<div style="right:712.5px;top:306.39px;font-size:12.5px;line-height:12.5px;font-weight:400;color:#000;white-space:pre;">-60</div>
<div style="right:712.5px;top:354.22px;font-size:12.5px;line-height:12.5px;font-weight:400;color:#000;white-space:pre;">-80</div>
<div style="left:126.5px;width:400px;text-align:center;top:402.62px;font-size:12.5px;line-height:12.5px;font-weight:400;color:#000;white-space:pre;">0</div>
<div style="left:260.5px;width:400px;text-align:center;top:402.62px;font-size:12.5px;line-height:12.5px;font-weight:400;color:#000;white-space:pre;">100</div>
<div style="left:394.5px;width:400px;text-align:center;top:402.62px;font-size:12.5px;line-height:12.5px;font-weight:400;color:#000;white-space:pre;">200</div>
<div style="left:528.5px;width:400px;text-align:center;top:402.62px;font-size:12.5px;line-height:12.5px;font-weight:400;color:#000;white-space:pre;">300</div>
<div style="left:662.5px;width:400px;text-align:center;top:402.62px;font-size:12.5px;line-height:12.5px;font-weight:400;color:#000;white-space:pre;">400</div>
<div style="right:13.5px;top:402.62px;font-size:12.5px;line-height:12.5px;font-weight:400;color:#000;white-space:pre;">500</div>
<svg style="left:0px;top:0px" width="1019" height="857" viewBox="0 0 1019 857"><path d="M322 437.5H1006 M322 508.5H1006 M322 579.5H1006 M322 650.5H1006 M322 720.5H1006 M326.5 419V739 M460.5 419V739 M594.5 419V739 M728.5 419V739 M862.5 419V739 M996.5 419V739" stroke="#a4a4a4" stroke-width="1" stroke-dasharray="1 2" fill="none" shape-rendering="crispEdges"/><path d="M326.1 718.6C337.63 720.63 383.77 728.77 395.3 730.8C395.42 730.87 395.88 731.13 395.99 731.2C396.05 730.7 396.24 729.2 396.36 728.2C396.48 727.2 396.59 726.2 396.7 725.2C396.82 724.2 396.93 723.2 397.04 722.2C397.15 721.2 397.25 720.2 397.35 719.2C397.46 718.2 397.56 717.2 397.66 716.2C397.76 715.2 397.85 714.2 397.95 713.2C398.04 712.2 398.14 711.2 398.23 710.2C398.32 709.2 398.41 708.2 398.49 707.2C398.58 706.2 398.66 705.2 398.75 704.2C398.83 703.2 398.91 702.2 398.99 701.2C399.07 700.2 399.15 699.2 399.22 698.2C399.3 697.2 399.37 696.2 399.45 695.2C399.52 694.2 399.59 693.2 399.66 692.2C399.73 691.2 399.8 690.2 399.87 689.2C399.93 688.2 400 687.2 400.06 686.2C400.13 685.2 400.19 684.2 400.26 683.2C400.32 682.2 400.38 681.2 400.44 680.2C400.5 679.2 400.56 678.2 400.62 677.2C400.68 676.2 400.74 675.2 400.79 674.2C400.85 673.2 400.91 672.2 400.96 671.2C401.02 670.2 401.07 669.2 401.13 668.2C401.18 667.2 401.24 666.2 401.29 665.2C401.34 664.2 401.4 663.2 401.45 662.2C401.5 661.2 401.55 660.2 401.61 659.2C401.66 658.2 401.71 657.2 401.76 656.2C401.81 655.2 401.86 654.2 401.92 653.2C401.97 652.2 402.02 651.2 402.07 650.2C402.12 649.2 402.17 648.2 402.22 647.2C402.28 646.2 402.33 645.2 402.38 644.2C402.43 643.2 402.48 642.2 402.54 641.2C402.59 640.2 402.64 639.2 402.7 638.2C402.75 637.2 402.8 636.2 402.86 635.2C402.91 634.2 402.97 633.2 403.02 632.2C403.08 631.2 403.14 630.2 403.19 629.2C403.25 628.2 403.31 627.2 403.37 626.2C403.43 625.2 403.49 624.2 403.55 623.2C403.61 622.2 403.67 621.2 403.73 620.2C403.8 619.2 403.86 618.2 403.93 617.2C403.99 616.2 404.06 615.2 404.13 614.2C404.19 613.2 404.26 612.2 404.33 611.2C404.4 610.2 404.48 609.2 404.55 608.2C404.62 607.2 404.7 606.2 404.77 605.2C404.85 604.2 404.93 603.2 405.01 602.2C405.09 601.2 405.17 600.2 405.25 599.2C405.34 598.2 405.42 597.2 405.51 596.2C405.6 595.2 405.69 594.2 405.78 593.2C405.87 592.2 405.96 591.2 406.06 590.2C406.15 589.2 406.25 588.2 406.35 587.2C406.45 586.2 406.55 585.2 406.66 584.2C406.76 583.2 406.87 582.2 406.98 581.2C407.09 580.2 407.2 579.2 407.31 578.2C407.43 577.2 407.54 576.2 407.66 575.2C407.78 574.2 407.9 573.2 408.03 572.2C408.15 571.2 408.28 570.2 408.41 569.2C408.54 568.2 408.67 567.2 408.81 566.2C408.95 565.2 409.08 564.2 409.23 563.2C409.37 562.2 409.51 561.2 409.66 560.2C409.81 559.2 409.96 558.2 410.12 557.2C410.27 556.2 410.43 555.2 410.59 554.2C410.75 553.2 410.92 552.2 411.09 551.2C411.26 550.2 411.43 549.2 411.6 548.2C411.78 547.2 411.96 546.2 412.14 545.2C412.32 544.2 412.51 543.2 412.7 542.2C412.89 541.2 413.08 540.2 413.28 539.2C413.48 538.2 413.68 537.2 413.89 536.2C414.09 535.2 414.3 534.2 414.52 533.2C414.73 532.2 414.95 531.2 415.17 530.2C415.4 529.2 415.63 528.2 415.87 527.2C416.11 526.2 416.35 525.2 416.61 524.2C416.87 523.2 417.14 522.2 417.43 521.2C417.71 520.2 418.01 519.2 418.32 518.2C418.64 517.2 418.96 516.2 419.31 515.2C419.66 514.2 420.02 513.2 420.41 512.2C420.8 511.2 421.2 510.2 421.64 509.2C422.07 508.2 422.52 507.2 423 506.2C423.48 505.2 423.98 504.2 424.52 503.2C425.05 502.2 425.61 501.2 426.2 500.2C426.79 499.2 427.41 498.2 428.05 497.2C428.7 496.2 429.38 495.2 430.08 494.2C430.79 493.2 431.52 492.2 432.29 491.2C433.05 490.2 433.84 489.2 434.66 488.2C435.48 487.2 436.33 486.2 437.21 485.2C438.09 484.2 439 483.2 439.94 482.2C440.87 481.2 441.84 480.2 442.83 479.2C443.83 478.2 444.85 477.2 445.91 476.2C446.96 475.2 448.04 474.2 449.15 473.2C450.26 472.2 451.6 471.1 452.57 470.2C453.55 469.3 453.93 468.81 455 467.81C456.07 466.81 457.67 465.36 459 464.2C460.33 463.03 461.67 461.89 463 460.8C464.33 459.71 465.67 458.66 467 457.65C468.33 456.64 469.67 455.67 471 454.75C472.33 453.82 473.67 452.94 475 452.1C476.33 451.25 477.67 450.45 479 449.68C480.33 448.91 481.67 448.18 483 447.49C484.33 446.79 485.67 446.12 487 445.49C488.33 444.85 489.67 444.25 491 443.67C492.33 443.1 493.67 442.55 495 442.02C496.33 441.5 497.67 441 499 440.52C500.33 440.04 501.67 439.59 503 439.15C504.33 438.71 505.67 438.3 507 437.89C508.33 437.49 509.67 437.1 511 436.73C512.33 436.35 513.67 436 515 435.65C516.33 435.29 517.67 434.95 519 434.62C520.33 434.29 521.67 433.97 523 433.67C524.33 433.36 525.67 433.07 527 432.79C528.33 432.52 529.67 432.25 531 432.01C532.33 431.77 533.67 431.54 535 431.34C536.33 431.14 537.67 430.96 539 430.8C540.33 430.64 541.67 430.5 543 430.4C544.33 430.29 545.67 430.2 547 430.15C548.33 430.1 549.67 430.07 551 430.08C552.33 430.08 553.67 430.12 555 430.19C556.33 430.26 557.67 430.36 559 430.5C560.33 430.65 561.67 430.82 563 431.04C564.33 431.25 565.67 431.51 567 431.8C568.33 432.09 569.67 432.42 571 432.78C572.33 433.15 573.67 433.55 575 433.98C576.33 434.42 577.67 434.89 579 435.39C580.33 435.89 581.67 436.42 583 436.99C584.33 437.55 585.67 438.15 587 438.77C588.33 439.39 589.67 440.04 591 440.72C592.33 441.4 593.67 442.11 595 442.84C596.33 443.57 597.67 444.33 599 445.11C600.33 445.89 601.67 446.69 603 447.52C604.33 448.34 605.67 449.19 607 450.06C608.33 450.93 609.67 451.82 611 452.72C612.33 453.63 613.67 454.55 615 455.5C616.33 456.44 617.67 457.4 619 458.38C620.33 459.35 621.67 460.35 623 461.35C624.33 462.36 625.67 463.39 627 464.42C628.33 465.46 629.67 466.51 631 467.57C632.33 468.64 633.67 469.72 635 470.8C636.33 471.89 637.67 472.99 639 474.1C640.33 475.21 641.67 476.33 643 477.46C644.33 478.59 645.67 479.73 647 480.88C648.33 482.03 649.67 483.18 651 484.35C652.33 485.51 653.67 486.68 655 487.85C656.33 489.03 657.67 490.21 659 491.4C660.33 492.58 661.67 493.77 663 494.97C664.33 496.16 665.67 497.36 667 498.56C668.33 499.76 669.67 500.96 671 502.16C672.33 503.36 673.67 504.57 675 505.77C676.33 506.97 677.67 508.18 679 509.38C680.33 510.58 681.67 511.79 683 512.98C684.33 514.18 685.67 515.38 687 516.57C688.33 517.76 689.67 518.95 691 520.14C692.33 521.32 693.67 522.5 695 523.67C696.33 524.85 697.67 526.02 699 527.18C700.33 528.34 701.67 529.5 703 530.65C704.33 531.8 705.67 532.95 707 534.08C708.33 535.22 709.67 536.36 711 537.49C712.33 538.62 713.67 539.74 715 540.85C716.33 541.97 717.67 543.08 719 544.19C720.33 545.29 721.67 546.39 723 547.48C724.33 548.57 725.67 549.66 727 550.74C728.33 551.82 729.67 552.9 731 553.96C732.33 555.03 733.67 556.09 735 557.15C736.33 558.2 737.67 559.25 739 560.3C740.33 561.34 741.67 562.37 743 563.4C744.33 564.43 745.67 565.46 747 566.47C748.33 567.49 749.67 568.5 751 569.51C752.33 570.51 753.67 571.51 755 572.5C756.33 573.49 757.67 574.47 759 575.45C760.33 576.42 761.67 577.4 763 578.36C764.33 579.32 765.67 580.28 767 581.23C768.33 582.18 769.67 583.12 771 584.06C772.33 584.99 773.67 585.92 775 586.84C776.33 587.76 777.67 588.68 779 589.58C780.33 590.49 781.67 591.39 783 592.29C784.33 593.18 785.67 594.07 787 594.95C788.33 595.83 789.67 596.7 791 597.57C792.33 598.44 793.67 599.3 795 600.15C796.33 601.01 797.67 601.86 799 602.7C800.33 603.55 801.67 604.39 803 605.22C804.33 606.06 805.67 606.88 807 607.71C808.33 608.53 809.67 609.35 811 610.16C812.33 610.97 813.67 611.78 815 612.59C816.33 613.39 817.67 614.19 819 614.99C820.33 615.78 821.67 616.57 823 617.36C824.33 618.15 825.67 618.93 827 619.71C828.33 620.49 829.67 621.26 831 622.04C832.33 622.81 833.67 623.58 835 624.34C836.33 625.11 837.67 625.87 839 626.63C840.33 627.39 841.67 628.15 843 628.9C844.33 629.65 845.67 630.41 847 631.15C848.33 631.9 849.67 632.65 851 633.39C852.33 634.13 853.67 634.87 855 635.61C856.33 636.34 857.67 637.07 859 637.8C860.33 638.53 861.67 639.25 863 639.97C864.33 640.69 865.67 641.41 867 642.12C868.33 642.83 869.67 643.54 871 644.24C872.33 644.94 873.67 645.64 875 646.33C876.33 647.02 877.67 647.71 879 648.4C880.33 649.08 881.67 649.76 883 650.43C884.33 651.1 885.67 651.77 887 652.43C888.33 653.09 889.67 653.75 891 654.4C892.33 655.05 893.67 655.69 895 656.33C896.33 656.97 897.67 657.6 899 658.23C900.33 658.85 901.67 659.47 903 660.08C904.33 660.7 905.67 661.3 907 661.9C908.33 662.5 909.67 663.1 911 663.69C912.33 664.27 913.67 664.86 915 665.43C916.33 666.01 917.67 666.58 919 667.14C920.33 667.7 921.67 668.26 923 668.81C924.33 669.36 925.67 669.9 927 670.44C928.33 670.98 929.67 671.51 931 672.04C932.33 672.56 933.67 673.08 935 673.6C936.33 674.11 937.67 674.62 939 675.12C940.33 675.62 941.67 676.12 943 676.61C944.33 677.1 945.67 677.58 947 678.06C948.33 678.54 949.67 679.01 951 679.47C952.33 679.94 953.67 680.4 955 680.85C956.33 681.31 957.67 681.75 959 682.19C960.33 682.64 961.67 683.07 963 683.5C964.33 683.93 965.67 684.36 967 684.77C968.33 685.19 969.67 685.6 971 686.01C972.33 686.42 973.67 686.82 975 687.21C976.33 687.61 977.67 688 979 688.38C980.33 688.76 981.67 689.14 983 689.51C984.33 689.88 985.67 690.25 987 690.61C988.33 690.97 989.48 691.28 991 691.67C992.52 692.07 995.25 692.76 996.1 692.98" stroke="#4444a8" stroke-width="1.35" fill="none" stroke-linejoin="round"/><path d="M319.8 422.4V734 M311 437.5H320 M311 508.3H320 M311 579.1H320 M311 649.9H320 M311 720.7H320 M315 423.34H320 M315 451.66H320 M315 465.82H320 M315 479.98H320 M315 494.14H320 M315 522.46H320 M315 536.62H320 M315 550.78H320 M315 564.94H320 M315 593.26H320 M315 607.4200000000001H320 M315 621.58H320 M315 635.74H320 M315 664.06H320 M315 678.22H320 M315 692.38H320 M315 706.54H320 M326 742H997 M326.5 742V749 M353.3 742V745.5 M380.1 742V745.5 M406.9 742V745.5 M433.7 742V745.5 M460.5 742V749 M487.3 742V745.5 M514.1 742V745.5 M540.9 742V745.5 M567.7 742V745.5 M594.5 742V749 M621.3 742V745.5 M648.1 742V745.5 M674.9 742V745.5 M701.7 742V745.5 M728.5 742V749 M755.3 742V745.5 M782.1 742V745.5 M808.9 742V745.5 M835.7 742V745.5 M862.5 742V749 M889.3 742V745.5 M916.1 742V745.5 M942.9 742V745.5 M969.7 742V745.5 M996.5 742V749" stroke="#1a1a1a" stroke-width="1.3" fill="none"/></svg>
<div style="right:712.5px;top:432.22px;font-size:12.5px;line-height:12.5px;font-weight:400;color:#000;white-space:pre;">0.0005</div>
<div style="right:712.5px;top:503.02px;font-size:12.5px;line-height:12.5px;font-weight:400;color:#000;white-space:pre;">0.0004</div>
<div style="right:712.5px;top:573.82px;font-size:12.5px;line-height:12.5px;font-weight:400;color:#000;white-space:pre;">0.0003</div>
<div style="right:712.5px;top:644.62px;font-size:12.5px;line-height:12.5px;font-weight:400;color:#000;white-space:pre;">0.0002</div>
<div style="right:712.5px;top:715.42px;font-size:12.5px;line-height:12.5px;font-weight:400;color:#000;white-space:pre;">0.0001</div>
<div style="left:126.5px;width:400px;text-align:center;top:753.42px;font-size:12.5px;line-height:12.5px;font-weight:400;color:#000;white-space:pre;">0</div>
<div style="left:260.5px;width:400px;text-align:center;top:753.42px;font-size:12.5px;line-height:12.5px;font-weight:400;color:#000;white-space:pre;">100</div>
<div style="left:394.5px;width:400px;text-align:center;top:753.42px;font-size:12.5px;line-height:12.5px;font-weight:400;color:#000;white-space:pre;">200</div>
<div style="left:528.5px;width:400px;text-align:center;top:753.42px;font-size:12.5px;line-height:12.5px;font-weight:400;color:#000;white-space:pre;">300</div>
<div style="left:662.5px;width:400px;text-align:center;top:753.42px;font-size:12.5px;line-height:12.5px;font-weight:400;color:#000;white-space:pre;">400</div>
<div style="right:13.5px;top:753.42px;font-size:12.5px;line-height:12.5px;font-weight:400;color:#000;white-space:pre;">500</div>
<div style="left:11px;top:771px;width:996px;height:1px;background:#a0a0a0"></div>
<div style="left:11px;top:772px;width:996px;height:73px;background:#fff"></div>
<div style="left:11px;top:845px;width:996px;height:1px;background:#a0a0a0"></div>
<div style="left:15px;top:776.50px;font-size:11.7px;line-height:11.7px;font-weight:700;color:#000;letter-spacing:0.260px;white-space:pre;">C:\Users\mv12\Documents\MATLAB\CellML\Varela_RA_2016.cellml</div>
<div style="left:27.5px;top:790.50px;font-size:11.7px;line-height:11.7px;font-weight:700;color:#000;letter-spacing:0.035px;white-space:pre;">Runtime:</div>
<div style="left:80.0px;top:791.09px;font-size:11px;line-height:11px;font-weight:400;color:#118a11;letter-spacing:0.002px;white-space:pre;">valid.</div>
<div style="left:27.5px;top:803.30px;font-size:11.7px;line-height:11.7px;font-weight:700;color:#000;letter-spacing:0.096px;white-space:pre;">Model type:</div>
<div style="left:95.0px;top:803.89px;font-size:11px;line-height:11px;font-weight:400;color:#15159e;letter-spacing:-0.669px;white-space:pre;">ODE.</div>
<div style="left:27.5px;top:816.20px;font-size:11.7px;line-height:11.7px;font-weight:700;color:#000;letter-spacing:0.059px;white-space:pre;">Simulation time:</div>
<div style="left:120.9px;top:816.79px;font-size:11px;line-height:11px;font-weight:400;color:#15159e;letter-spacing:-0.299px;white-space:pre;">0.016 s using CVODE.</div>
<div style="left:1008px;top:372px;width:11px;height:72px;background:#fff"></div>
<div style="left:1008px;top:372px;width:11px;height:1px;background:#898c95"></div>
<div style="left:1008px;top:443px;width:11px;height:1px;background:#898c95"></div>
<div style="left:1008px;top:444px;width:2px;height:47px;background:linear-gradient(90deg,#bdbdbd,#e0e0e0)"></div>
<div style="left:1023.3px;top:384.5px;font-size:10px;line-height:11px;white-space:pre;transform-origin:0 0;transform:rotate(90deg);">Single Cell</div>
<div style="left:0px;top:369px;width:10px;height:52px;background:linear-gradient(90deg,#e6e6e6,#cfcfcf)"></div>
<div style="left:0px;top:369px;width:10px;height:1px;background:#a8a8a8"></div>
<div style="left:0px;top:421px;width:10px;height:1px;background:#a8a8a8"></div>
<div style="left:0px;top:422px;width:10px;height:72px;background:#fff"></div>
<div style="left:0px;top:494px;width:10px;height:1px;background:#a8a8a8"></div>
<div style="left:-5.3px;top:410.8px;font-size:10px;line-height:11px;white-space:pre;transform-origin:0 0;transform:rotate(-90deg);">Editing</div>
<div style="left:-5.3px;top:483px;font-size:10px;line-height:11px;white-space:pre;transform-origin:0 0;transform:rotate(-90deg);">Simulation</div>
</body></html>
